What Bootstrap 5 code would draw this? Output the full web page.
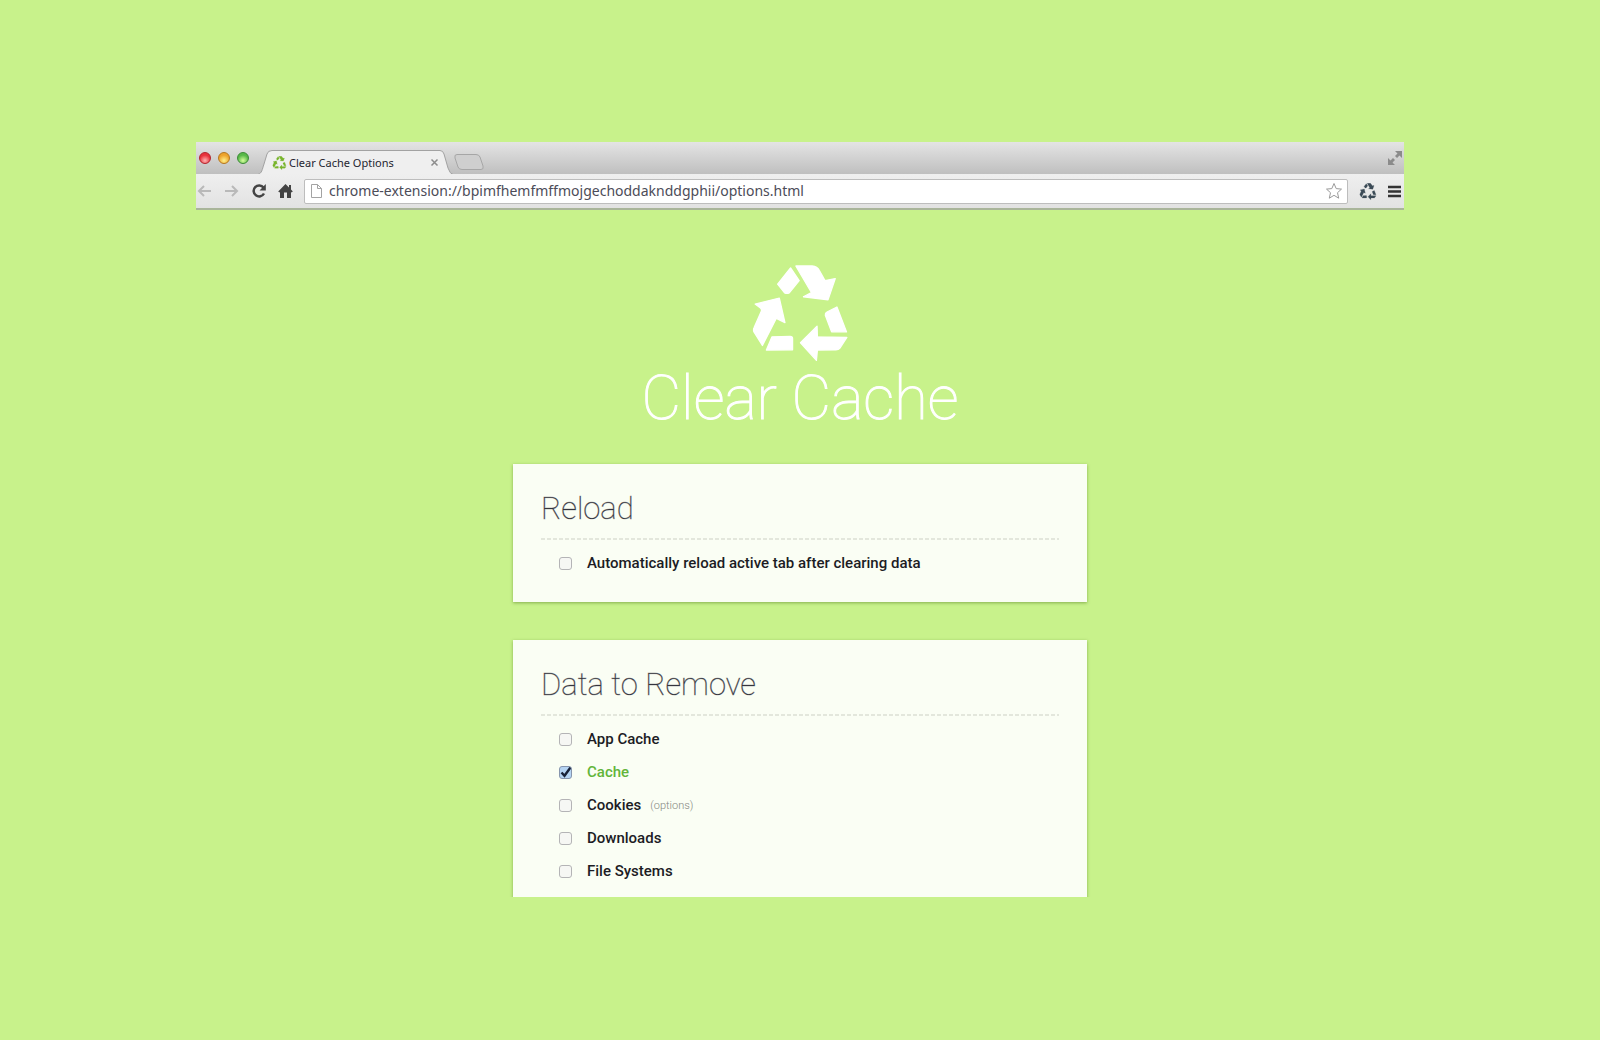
<!DOCTYPE html>
<html lang="en">
<head>
<meta charset="utf-8">
<meta name="viewport" content="width=device-width, initial-scale=1">
<title>Clear Cache Options</title>
<link href="https://cdn.jsdelivr.net/npm/bootstrap@5.3.0/dist/css/bootstrap.min.css" rel="stylesheet">
<style>
  body { background: #c8f28b; font-family: Roboto, sans-serif; color: #1c1c24; }
  .stage { padding: 142px 12.25% 143px; }
  .browser { overflow: hidden; }
  .tab-strip { height: 32px; background: linear-gradient(#e4e4e4, #bfbfbf); padding-left: 3px; }
  .lights { gap: 7px; padding: 10px 1px 0 0; }
  .light { width: 12px; height: 12px; border-radius: 50%; border: 1px solid; padding: 0; }
  .light-red { background: radial-gradient(circle at 50% 75%, #ffb3b3, #e8323c 60%); border-color: #b3222b; }
  .light-amber { background: radial-gradient(circle at 50% 75%, #fff08a, #eda32c 60%); border-color: #b5761c; }
  .light-green { background: radial-gradient(circle at 50% 75%, #d6ff9c, #58b848 60%); border-color: #3a8a35; }
  .page-tab { width: 195px; height: 24px; padding: 0 14px; font: 11px/25px "Noto Sans", sans-serif; color: #25252f; }
  .tab-body { gap: 2px; }
  .plain-btn { background: none; border: 0; padding: 0; display: flex; }
  .new-tab { margin-top: 11px; }
  .tool-row { height: 36px; background: linear-gradient(#efefef, #e2e2e2); border-bottom: 2px solid #a9b59a; padding: 0 3px 0 1px; gap: 11px; }
  .tool-row nav { gap: 11px; }
  .address { height: 25px; background: #fff; border: 1px solid #bdbdbd; border-radius: 2px; padding: 0 4px; }
  .address input { border: 0; outline: 0; background: none; padding: 0; font: 14px/20px "Noto Sans", sans-serif; color: #4c4c58; }
  .options-pane { height: 687px; overflow: hidden; padding-top: 54px; }
  .app-title { font-size: 61px; line-height: 72px; font-weight: 100; color: #fff; -webkit-text-stroke: 1px #fff; margin-bottom: 30px; }
  .panel { width: 574px; max-width: 100%; background: #fafef4; box-shadow: 0 1px 3px rgba(70, 110, 20, .5); padding: 28px 28px 22px; margin-bottom: 38px; }
  .panel h2 { font-size: 31px; line-height: 34px; font-weight: 100; color: #33333b; -webkit-text-stroke: 1px rgba(60, 60, 70, .3); margin: 0; padding-bottom: 12px; }
  .dash-rule { height: 2px; background: repeating-linear-gradient(90deg, #e3e7dc 0 4px, transparent 4px 6px); }
  .opt-list { padding: 7px 0 0 18px; }
  .opt-row { height: 33px; font-size: 15px; line-height: 33px; font-weight: 500; }
  .opt-row .form-check-input { width: 13px; height: 13px; margin: 0 15px 0 0; border: 1px solid #b4b4b6; border-radius: 3px; background-color: #f6f7f4; flex: none; box-shadow: none; }
  .opt-row .form-check-input:checked { border-color: #8695ad; background-color: #b5d4f3; background-size: 13px 13px; background-image: url("data:image/svg+xml,%3csvg xmlns='http://www.w3.org/2000/svg' viewBox='0 0 13 13'%3e%3cpath fill='none' stroke='%23182238' stroke-width='2.4' d='M2.5 6.5 5.5 9.8 11.8 1'/%3e%3c/svg%3e"); }
  .opt-row .form-check-input:checked + label { color: #62b53a; }
  .opt-link { font-size: 11px; font-weight: 300; color: #85877f; margin-left: 9px; text-decoration: none; }
</style>
</head>
<body>
<svg class="d-none" aria-hidden="true">
  <symbol id="recycle" viewBox="66 42 290 296">
    <g stroke-width="4" stroke-linejoin="round" stroke="currentColor" fill="currentColor">
      <path d="M181 54 207 92 177 129Q170 132 163 129L142 103Z"/>
      <path d="M197 48H246Q262 50 268 62L285 92 316 86 294 150 220 141 244 128Z"/>
      <path d="M74 163 147 145 164 219 138 206 96 288 70 246Q68 240 71 234L93 184Q94 178 90 175Z"/>
      <path d="M125 262 180 261Q187 261 187 267V301L108 302Z"/>
      <path d="M321 172 350 247 305 247 286 197Q285 190 291 187Z"/>
      <path d="M351 264 330 296Q326 301 318 301L262 302 259 333 211 280 261 230 262 262Z"/>
    </g>
  </symbol>
</svg>
<div class="stage">
  <div class="browser">
    <header>
      <div class="tab-strip d-flex align-items-start">
        <div class="lights d-flex">
          <button class="light light-red" aria-label="Close window"></button>
          <button class="light light-amber" aria-label="Minimize window"></button>
          <button class="light light-green" aria-label="Zoom window"></button>
        </div>
        <div class="page-tab position-relative ms-2 mt-2">
          <svg class="position-absolute top-0 start-0" width="195" height="24" aria-hidden="true"><path d="M0 24.500C4 23 4 20 6 14L9 4Q10 .5 14 .5H182Q185 .5 186 4L190 18Q192 24 195 24.500" fill="#efefef" stroke="#a2a2a2"/></svg>
          <div class="tab-body position-relative d-flex align-items-center">
            <svg width="15" height="14" color="#78b52c" aria-hidden="true"><use href="#recycle"/></svg>
            <span class="flex-grow-1">Clear Cache Options</span>
            <button class="plain-btn" aria-label="Close tab"><svg width="9" height="9"><path d="M1.500 1.500 7.500 7.500M7.500 1.500 1.500 7.500" stroke="#8c8c8c" stroke-width="1.500"/></svg></button>
          </div>
        </div>
        <button class="plain-btn new-tab" aria-label="New tab"><svg width="32" height="18"><path d="M4 1.500H23Q26 1.500 27 4L30 13Q31 16.500 28 16.500H9Q6 16.500 5 14L2 5Q1 1.500 4 1.500Z" fill="#cfcfcf" stroke="#a6a6a6"/></svg></button>
        <button class="plain-btn ms-auto mt-1 pt-1" aria-label="Full screen"><svg width="17" height="16" fill="#8b8b8b"><path d="M8 1H15V8L12.500 5.500 10 8 8 6 10.500 3.500ZM1 8 3.500 10.500 6 8 8 10 5.500 12.500 8 15H1Z"/></svg></button>
      </div>
      <div class="tool-row d-flex align-items-center">
        <nav class="d-flex align-items-center" aria-label="Browser controls">
          <button class="plain-btn" aria-label="Back"><svg width="16" height="16" fill="none" stroke="#b9b9b9" stroke-width="2"><path d="M14 8H2M7 3 2 8 7 13"/></svg></button>
          <button class="plain-btn" aria-label="Forward"><svg width="16" height="16" fill="none" stroke="#b9b9b9" stroke-width="2"><path d="M1 8H13M8 3 13 8 8 13"/></svg></button>
          <button class="plain-btn" aria-label="Reload"><svg width="16" height="16"><path d="M12.500 4.500A5.500 5.500 0 1 0 13 10.500" fill="none" stroke="#444" stroke-width="2.500"/><path d="M14.800 1V7.500H8.500Z" fill="#444"/></svg></button>
          <button class="plain-btn" aria-label="Home"><svg width="15" height="16" fill="#444"><path d="M7.500 1 11 4.500V2H13V6.500L14.800 8.500 13.500 9.500 13 9V15H9V9.500H6V15H2V9L1.500 9.500.2 8.500Z"/></svg></button>
        </nav>
        <div class="address d-flex align-items-center flex-grow-1">
          <svg width="16" height="16" aria-hidden="true"><path d="M2.500 1.500H8.500L12.500 5.500V14.500H2.500ZM8.500 1.500V5.500H12.500" fill="#fff" stroke="#a3a3a3"/></svg>
          <input class="flex-grow-1 ms-1" type="text" aria-label="Address" value="chrome-extension://bpimfhemfmffmojgechoddaknddgphii/options.html">
          <button class="plain-btn" aria-label="Bookmark this page"><svg width="18" height="18"><path d="M9 1.500 11.200 6.600 16.500 7.100 12.500 10.700 13.700 16.200 9 13.300 4.300 16.200 5.500 10.700 1.500 7.100 6.800 6.600Z" fill="#fff" stroke="#9a9a9a"/></svg></button>
        </div>
        <button class="plain-btn" aria-label="Clear Cache"><svg width="18" height="17" color="#3b4a56"><use href="#recycle"/></svg></button>
        <button class="plain-btn" aria-label="Menu"><svg width="13" height="13"><path d="M0 2H13M0 6.500H13M0 11H13" stroke="#333" stroke-width="2.500"/></svg></button>
      </div>
    </header>
    <main class="options-pane d-flex flex-column align-items-center">
      <svg class="flex-shrink-0" width="97" height="98" color="#fff" aria-hidden="true"><use href="#recycle"/></svg>
      <h1 class="app-title">Clear Cache</h1>
      <section class="panel flex-shrink-0">
        <h2>Reload</h2>
        <div class="dash-rule"></div>
        <div class="opt-list">
          <div class="opt-row d-flex align-items-center"><input class="form-check-input" type="checkbox" id="auto"><label for="auto">Automatically reload active tab after clearing data</label></div>
        </div>
      </section>
      <section class="panel flex-shrink-0">
        <h2>Data to Remove</h2>
        <div class="dash-rule"></div>
        <div class="opt-list">
          <div class="opt-row d-flex align-items-center"><input class="form-check-input" type="checkbox" id="appcache"><label for="appcache">App Cache</label></div>
          <div class="opt-row d-flex align-items-center"><input class="form-check-input" type="checkbox" id="cache" checked><label for="cache">Cache</label></div>
          <div class="opt-row d-flex align-items-center"><input class="form-check-input" type="checkbox" id="cookies"><label for="cookies">Cookies</label><a class="opt-link" href="#cookies">(options)</a></div>
          <div class="opt-row d-flex align-items-center"><input class="form-check-input" type="checkbox" id="downloads"><label for="downloads">Downloads</label></div>
          <div class="opt-row d-flex align-items-center"><input class="form-check-input" type="checkbox" id="files"><label for="files">File Systems</label></div>
        </div>
      </section>
    </main>
  </div>
</div>
<script src="https://cdn.jsdelivr.net/npm/bootstrap@5.3.0/dist/js/bootstrap.bundle.min.js"></script>
</body>
</html>
